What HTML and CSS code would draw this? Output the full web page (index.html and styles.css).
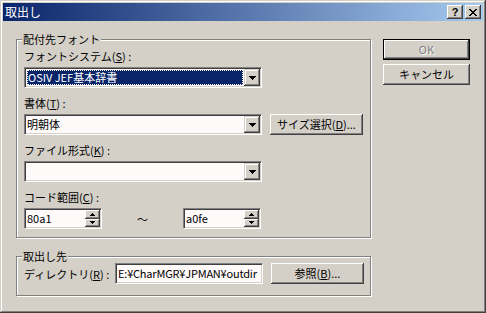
FILE: index.html
```html
<!DOCTYPE html>
<html lang="ja">
<head>
  <meta charset="UTF-8">
  <meta name="viewport" content="width=device-width, initial-scale=1.0">
  <title>取出し</title>
  <link rel="stylesheet" href="styles.css">
</head>
<body>
  <div class="window">
    <div class="titlebar">
      <span class="title">取出し</span>
      <div class="caption-buttons">
        <span class="cap-btn">?</span>
        <span class="cap-btn">
          <svg width="8" height="7" viewBox="0 0 8 7" shape-rendering="crispEdges"><path d="M0 0h2v1H0zM6 0h2v1H6zM1 1h2v1H1zM5 1h2v1H5zM2 2h4v1H2zM3 3h2v1H3zM2 4h4v1H2zM1 5h2v1H1zM5 5h2v1H5zM0 6h2v1H0zM6 6h2v1H6z" fill="#000"/></svg>
        </span>
      </div>
    </div>

    <div class="client">
      <div class="groups">
        <div class="group group-font">
          <span class="legend">配付先フォント</span>

          <div class="label">フォントシステム(<u>S</u>) :</div>
          <div class="row">
            <div class="field combo">
              <div class="combo-text selected"><span class="focus">OSIV JEF基本辞書</span></div>
              <span class="drop"><svg width="7" height="4" viewBox="0 0 7 4" shape-rendering="crispEdges"><path d="M0 0h7v1H0zM1 1h5v1H1zM2 2h3v1H2zM3 3h1v1H3z" fill="#000"/></svg></span>
            </div>
          </div>

          <div class="label">書体(<u>T</u>) :</div>
          <div class="row">
            <div class="field combo">
              <div class="combo-text">明朝体</div>
              <span class="drop"><svg width="7" height="4" viewBox="0 0 7 4" shape-rendering="crispEdges"><path d="M0 0h7v1H0zM1 1h5v1H1zM2 2h3v1H2zM3 3h1v1H3z" fill="#000"/></svg></span>
            </div>
            <button class="button button-side">サイズ選択(<u>D</u>)...</button>
          </div>

          <div class="label">ファイル形式(<u>K</u>) :</div>
          <div class="row">
            <div class="field combo">
              <div class="combo-text"></div>
              <span class="drop"><svg width="7" height="4" viewBox="0 0 7 4" shape-rendering="crispEdges"><path d="M0 0h7v1H0zM1 1h5v1H1zM2 2h3v1H2zM3 3h1v1H3z" fill="#000"/></svg></span>
            </div>
          </div>

          <div class="label">コード範囲(<u>C</u>) :</div>
          <div class="row">
            <div class="field spin">
              <div class="spin-text">80a1</div>
              <div class="spin-buttons">
                <span class="spin-btn"><svg width="5" height="3" viewBox="0 0 5 3" shape-rendering="crispEdges"><path d="M2 0h1v1H2zM1 1h3v1H1zM0 2h5v1H0z" fill="#000"/></svg></span>
                <span class="spin-btn"><svg width="5" height="3" viewBox="0 0 5 3" shape-rendering="crispEdges"><path d="M0 0h5v1H0zM1 1h3v1H1zM2 2h1v1H2z" fill="#000"/></svg></span>
              </div>
            </div>
            <span class="tilde">～</span>
            <div class="field spin">
              <div class="spin-text">a0fe</div>
              <div class="spin-buttons">
                <span class="spin-btn"><svg width="5" height="3" viewBox="0 0 5 3" shape-rendering="crispEdges"><path d="M2 0h1v1H2zM1 1h3v1H1zM0 2h5v1H0z" fill="#000"/></svg></span>
                <span class="spin-btn"><svg width="5" height="3" viewBox="0 0 5 3" shape-rendering="crispEdges"><path d="M0 0h5v1H0zM1 1h3v1H1zM2 2h1v1H2z" fill="#000"/></svg></span>
              </div>
            </div>
          </div>
        </div>

        <div class="group group-dest">
          <span class="legend">取出し先</span>
          <div class="row">
            <span class="dir-label">ディレクトリ(<u>R</u>) :</span>
            <div class="field edit">E:¥CharMGR¥JPMAN¥outdir</div>
            <button class="button button-side">参照(<u>B</u>)...</button>
          </div>
        </div>
      </div>

      <div class="side-buttons">
        <button class="button button-default" disabled>OK</button>
        <button class="button">キャンセル</button>
      </div>
    </div>
  </div>
</body>
</html>
```

FILE: styles.css
```css
body {
  margin: 0;
  background-color: #d4d0c8;
  font-family: "Noto Sans CJK JP", sans-serif;
  font-size: 11px;
  color: #000;
}
u {
  text-decoration: underline;
  text-underline-offset: 1px;
}
.window {
  width: 486px;
  height: 313px;
  box-sizing: border-box;
  padding: 3px;
  background-color: #d4d0c8;
  box-shadow: inset -1px -1px #404040, inset 1px 1px #d4d0c8, inset -2px -2px #808080, inset 2px 2px #fff;
}
.titlebar {
  height: 18px;
  display: flex;
  align-items: center;
  justify-content: space-between;
  padding: 0 2px 0 2px;
  background: linear-gradient(to right, #0a246a, #a6caf0);
}
.title {
  color: #fff;
  font-size: 12px;
  line-height: 18px;
}
.caption-buttons {
  display: flex;
  gap: 2px;
}
.cap-btn {
  width: 16px;
  height: 14px;
  box-sizing: border-box;
  display: flex;
  align-items: center;
  justify-content: center;
  background-color: #d4d0c8;
  font-family: "Liberation Sans", sans-serif;
  font-weight: bold;
  font-size: 11px;
  line-height: 14px;
  box-shadow: inset -1px -1px #404040, inset 1px 1px #fff, inset -2px -2px #808080;
}
.client {
  display: flex;
  padding: 18px 0 0 13px;
  gap: 12px;
}
.groups {
  width: 355px;
  display: flex;
  flex-direction: column;
  gap: 18px;
}
.group {
  position: relative;
  box-sizing: border-box;
  border: 1px solid #808080;
  box-shadow: inset 1px 1px #fff, 1px 1px #fff;
  padding-left: 7px;
}
.group-font {
  height: 199px;
  padding-top: 9px;
}
.group-dest {
  height: 40px;
  padding-top: 6px;
}
.legend {
  position: absolute;
  top: -8px;
  left: 5px;
  padding: 0 1px;
  line-height: 14px;
  background-color: #d4d0c8;
}
.label {
  height: 14px;
  line-height: 14px;
  margin-bottom: 4px;
}
.row {
  display: flex;
  align-items: center;
  gap: 8px;
  margin-bottom: 8px;
}
.field {
  box-sizing: border-box;
  height: 21px;
  background-color: #fffafa;
  border: 1px solid;
  border-color: #808080 #fff #fff #808080;
  box-shadow: inset 1px 1px #404040, inset -1px -1px #d4d0c8;
  padding: 1px;
}
.combo {
  width: 238px;
  display: flex;
}
.combo-text {
  flex: 1;
  padding: 1px 1px;
  line-height: 15px;
}
.combo-text.selected {
  background-color: #0a246a;
  color: #fff;
  margin: 1px;
  padding: 0;
  outline: 1px dotted #fff;
  outline-offset: -1px;
}
.focus {
  display: block;
  padding-left: 1px;
  line-height: 15px;
}
.drop {
  width: 16px;
  height: 17px;
  box-sizing: border-box;
  display: flex;
  align-items: center;
  justify-content: center;
  background-color: #d4d0c8;
  box-shadow: inset -1px -1px #404040, inset 1px 1px #d4d0c8, inset -2px -2px #808080, inset 2px 2px #fff;
}
.button {
  box-sizing: border-box;
  height: 21px;
  padding: 0;
  font-family: "Noto Sans CJK JP", sans-serif;
  font-size: 11px;
  line-height: 17px;
  color: #000;
  background-color: #d4d0c8;
  border: none;
  box-shadow: inset -1px -1px #404040, inset 1px 1px #fff, inset -2px -2px #808080, inset 2px 2px #d4d0c8;
}
.button-side {
  width: 93px;
}
.side-buttons {
  display: flex;
  flex-direction: column;
  gap: 4px;
  width: 87px;
}
.button-default {
  border: 1px solid #000;
  box-shadow: inset -1px -1px #404040, inset 1px 1px #fff, inset -2px -2px #808080;
}
.button:disabled {
  color: #808080;
  text-shadow: 1px 1px #fff;
}
.spin {
  width: 78px;
  display: flex;
  align-items: stretch;
}
.spin-text {
  flex: 1;
  padding-left: 1px;
  line-height: 17px;
}
.spin-buttons {
  width: 15px;
  display: flex;
  flex-direction: column;
}
.spin-btn {
  flex: 1;
  display: flex;
  align-items: center;
  justify-content: center;
  background-color: #d4d0c8;
  box-shadow: inset -1px -1px #404040, inset 1px 1px #fff, inset -2px -2px #808080;
}
.tilde {
  width: 65px;
  text-align: center;
}
.dir-label {
  width: 83px;
  line-height: 14px;
  white-space: nowrap;
}
.edit {
  width: 148px;
  padding-left: 2px;
  line-height: 17px;
  letter-spacing: -0.2px;
  white-space: nowrap;
  overflow: hidden;
}
```
